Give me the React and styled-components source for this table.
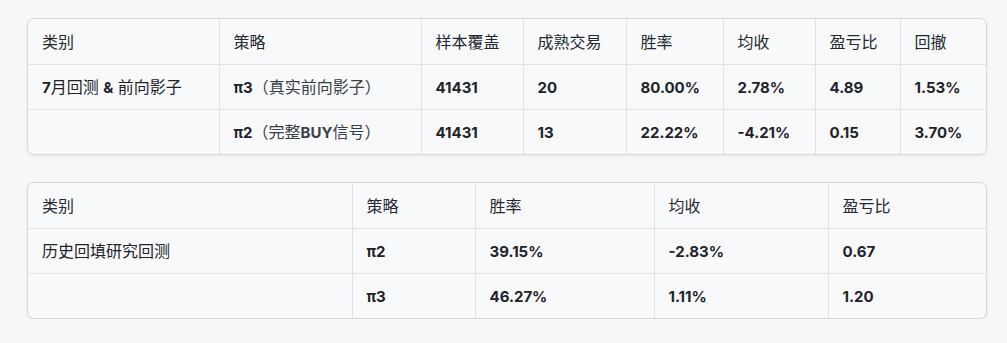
import React from "react";
import styled, { createGlobalStyle } from "styled-components";

const GlobalStyle = createGlobalStyle`
  html, body {
    margin: 0;
    padding: 0;
    background: #f6f7f9;
  }
  body {
    font-family: Inter, "Noto Sans CJK SC", "Noto Sans", sans-serif;
    color: #1f2328;
  }
`;

const Page = styled.div`
  display: flex;
  flex-direction: column;
  gap: 27px;
  padding: 18px 22px 0 27px;
`;

const Card = styled.div`
  width: 958px;
  border: 1px solid #d5dae1;
  border-radius: 7px;
  background: #f8f9fb;
  box-shadow: 0 1px 3px rgba(31, 35, 40, 0.08);
  overflow: hidden;
`;

const Table = styled.table`
  width: 100%;
  border-collapse: collapse;
  table-layout: fixed;
  font-size: 16px;
  line-height: 22px;
`;

const Th = styled.th`
  height: 45px;
  padding: 0 14px;
  text-align: left;
  font-weight: 400;
  color: #24292f;
  border-bottom: 1px solid #dfe3e8;
  border-left: 1px solid #dfe3e8;
  &:first-child {
    border-left: none;
  }
`;

const Td = styled.td`
  height: 44px;
  padding: 0 14px;
  text-align: left;
  font-weight: 400;
  color: #1f2328;
  border-top: 1px solid #dfe3e8;
  border-left: 1px solid #dfe3e8;
  white-space: nowrap;
  &:first-child {
    border-left: none;
  }
`;

const Strong = styled.span`
  font-size: 15px;
  font-weight: 700;
`;

const Dim = styled.span`
  color: #3a4048;
`;

const tableOne = {
  widths: [191, 202, 102, 103, 97, 92, 85, 86],
  head: ["类别", "策略", "样本覆盖", "成熟交易", "胜率", "均收", "盈亏比", "回撤"],
  rows: [
    [
      <>
        <Strong>7</Strong>月回测 <Strong>&amp;</Strong> 前向影子
      </>,
      <>
        <Strong>π3</Strong>
        <Dim>（真实前向影子）</Dim>
      </>,
      "41431",
      "20",
      "80.00%",
      "2.78%",
      "4.89",
      "1.53%",
    ],
    [
      "",
      <>
        <Strong>π2</Strong>
        <Dim>
          （完整<Strong>BUY</Strong>信号）
        </Dim>
      </>,
      "41431",
      "13",
      "22.22%",
      "-4.21%",
      "0.15",
      "3.70%",
    ],
  ],
};

const tableTwo = {
  widths: [324, 123, 179, 174, 158],
  head: ["类别", "策略", "胜率", "均收", "盈亏比"],
  rows: [
    ["历史回填研究回测", "π2", "39.15%", "-2.83%", "0.67"],
    ["", "π3", "46.27%", "1.11%", "1.20"],
  ],
};

const renderCell = (value, index) => {
  if (typeof value !== "string") return value;
  if (index === 0) return value;
  return <Strong>{value}</Strong>;
};

const StatsTable = ({ data }) => (
  <Card>
    <Table>
      <colgroup>
        {data.widths.map((w, i) => (
          <col key={i} style={{ width: w }} />
        ))}
      </colgroup>
      <thead>
        <tr>
          {data.head.map((h) => (
            <Th key={h}>{h}</Th>
          ))}
        </tr>
      </thead>
      <tbody>
        {data.rows.map((row, r) => (
          <tr key={r}>
            {row.map((cell, c) => (
              <Td key={c}>{renderCell(cell, c)}</Td>
            ))}
          </tr>
        ))}
      </tbody>
    </Table>
  </Card>
);

const App = () => (
  <>
    <GlobalStyle />
    <Page>
      <StatsTable data={tableOne} />
      <StatsTable data={tableTwo} />
    </Page>
  </>
);

export default App;
